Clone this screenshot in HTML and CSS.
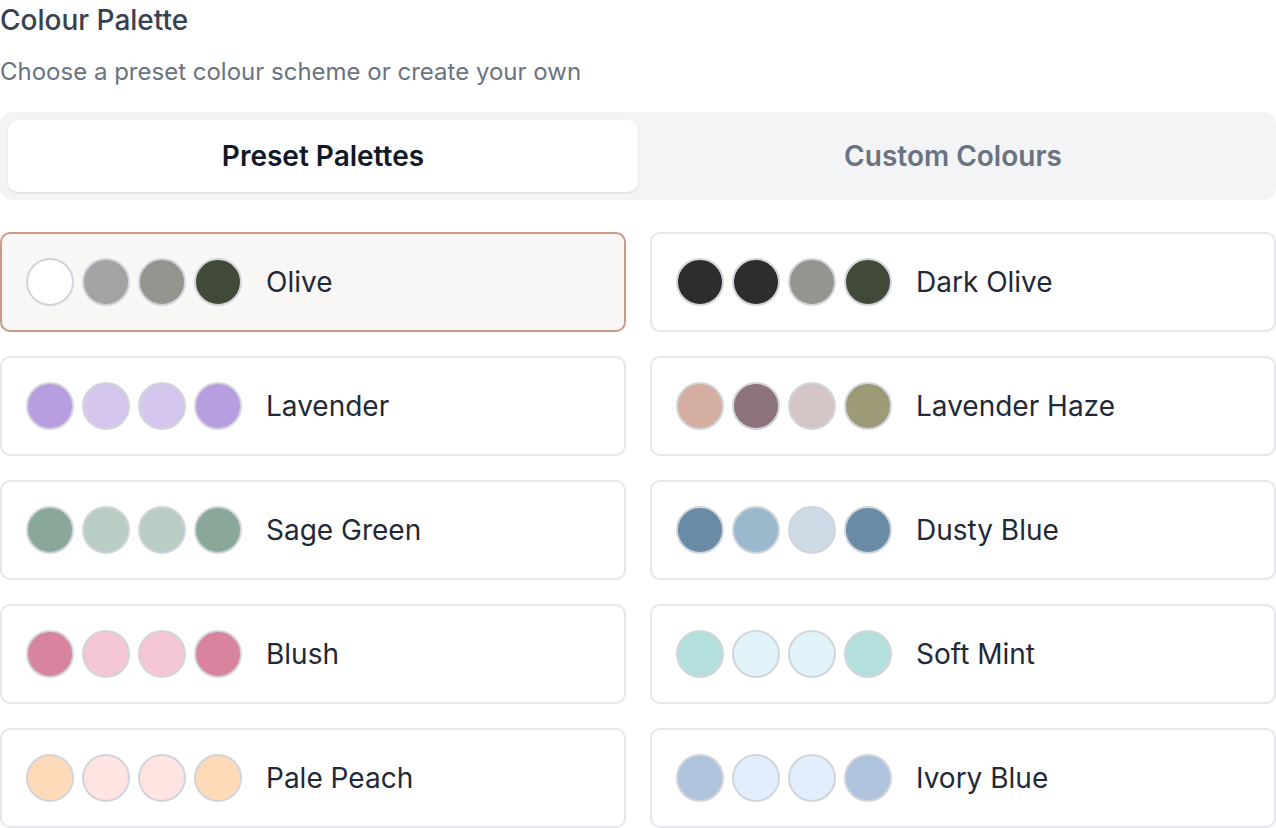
FILE: index.html
```html
<!DOCTYPE html>
<html lang="en">
<head>
<meta charset="utf-8">
<title>Colour Palette</title>
<link rel="stylesheet" href="styles.css">
</head>
<body>
<section class="palette">
  <h2 class="title">Colour Palette</h2>
  <p class="subtitle">Choose a preset colour scheme or create your own</p>
  <div class="tabs">
    <button class="tab active">Preset Palettes</button>
    <button class="tab">Custom Colours</button>
  </div>
  <div class="grid">
    <div class="card selected">
      <div class="dots"><span class="dot" style="background:#ffffff"></span><span class="dot" style="background:#a3a3a3"></span><span class="dot" style="background:#94958f"></span><span class="dot" style="background:#414a38"></span></div>
      <span class="name">Olive</span>
    </div>
    <div class="card">
      <div class="dots"><span class="dot" style="background:#2d2d2d"></span><span class="dot" style="background:#2d2d2d"></span><span class="dot" style="background:#94958f"></span><span class="dot" style="background:#414a38"></span></div>
      <span class="name">Dark Olive</span>
    </div>
    <div class="card">
      <div class="dots"><span class="dot" style="background:#b89ee0"></span><span class="dot" style="background:#d4c6ec"></span><span class="dot" style="background:#d4c6ec"></span><span class="dot" style="background:#b89ee0"></span></div>
      <span class="name">Lavender</span>
    </div>
    <div class="card">
      <div class="dots"><span class="dot" style="background:#d4aea0"></span><span class="dot" style="background:#8d737c"></span><span class="dot" style="background:#d6c5c6"></span><span class="dot" style="background:#9d9a78"></span></div>
      <span class="name">Lavender Haze</span>
    </div>
    <div class="card">
      <div class="dots"><span class="dot" style="background:#8aa89a"></span><span class="dot" style="background:#b8cdc4"></span><span class="dot" style="background:#b8cdc4"></span><span class="dot" style="background:#8aa89a"></span></div>
      <span class="name">Sage Green</span>
    </div>
    <div class="card">
      <div class="dots"><span class="dot" style="background:#6a8ba5"></span><span class="dot" style="background:#9cb8cc"></span><span class="dot" style="background:#cddbe6"></span><span class="dot" style="background:#6a8ba5"></span></div>
      <span class="name">Dusty Blue</span>
    </div>
    <div class="card">
      <div class="dots"><span class="dot" style="background:#d9849e"></span><span class="dot" style="background:#f4c5d4"></span><span class="dot" style="background:#f4c5d4"></span><span class="dot" style="background:#d9849e"></span></div>
      <span class="name">Blush</span>
    </div>
    <div class="card">
      <div class="dots"><span class="dot" style="background:#b3e0dc"></span><span class="dot" style="background:#e0f3f8"></span><span class="dot" style="background:#e0f3f8"></span><span class="dot" style="background:#b3e0dc"></span></div>
      <span class="name">Soft Mint</span>
    </div>
    <div class="card">
      <div class="dots"><span class="dot" style="background:#ffdab8"></span><span class="dot" style="background:#ffe4e1"></span><span class="dot" style="background:#ffe4e1"></span><span class="dot" style="background:#ffdab8"></span></div>
      <span class="name">Pale Peach</span>
    </div>
    <div class="card">
      <div class="dots"><span class="dot" style="background:#b0c4de"></span><span class="dot" style="background:#e3eefc"></span><span class="dot" style="background:#e3eefc"></span><span class="dot" style="background:#b0c4de"></span></div>
      <span class="name">Ivory Blue</span>
    </div>
  </div>
</section>
</body>
</html>
```

FILE: styles.css
```css
* { box-sizing: border-box; }
html, body { margin: 0; padding: 0; background: #ffffff; }
body {
  font-family: Inter, "Noto Sans", "Liberation Sans", sans-serif;
  width: 1276px;
}
.palette { display: flex; flex-direction: column; }
.title {
  margin: 0;
  font-size: 28px;
  line-height: 40px;
  font-weight: 500;
  color: #374151;
}
.subtitle {
  margin: 16px 0 0;
  font-size: 24px;
  line-height: 32px;
  color: #6b7280;
}
.tabs {
  margin-top: 24px;
  display: flex;
  padding: 8px;
  background: #f3f4f6;
  border-radius: 12px;
}
.tab {
  flex: 1;
  height: 72px;
  border: none;
  background: transparent;
  font-family: inherit;
  font-size: 28px;
  font-weight: 600;
  color: #6b7280;
  border-radius: 10px;
  cursor: pointer;
}
.tab.active {
  background: #ffffff;
  color: #111827;
  box-shadow: 0 1px 3px rgba(0,0,0,0.08), 0 1px 2px rgba(0,0,0,0.04);
}
.grid {
  margin-top: 32px;
  display: grid;
  grid-template-columns: 1fr 1fr;
  gap: 24px;
}
.card {
  height: 100px;
  display: flex;
  align-items: center;
  padding: 0 24px;
  border: 2px solid #e5e7eb;
  border-radius: 10px;
  background: #ffffff;
}
.card.selected {
  border-color: #c69c89;
  background: #f8f7f5;
}
.dots { display: flex; gap: 8px; }
.dot {
  width: 48px;
  height: 48px;
  border-radius: 50%;
  border: 2px solid #d1d5db;
}
.name {
  margin-left: 24px;
  font-size: 28px;
  color: #1f2937;
}
```
